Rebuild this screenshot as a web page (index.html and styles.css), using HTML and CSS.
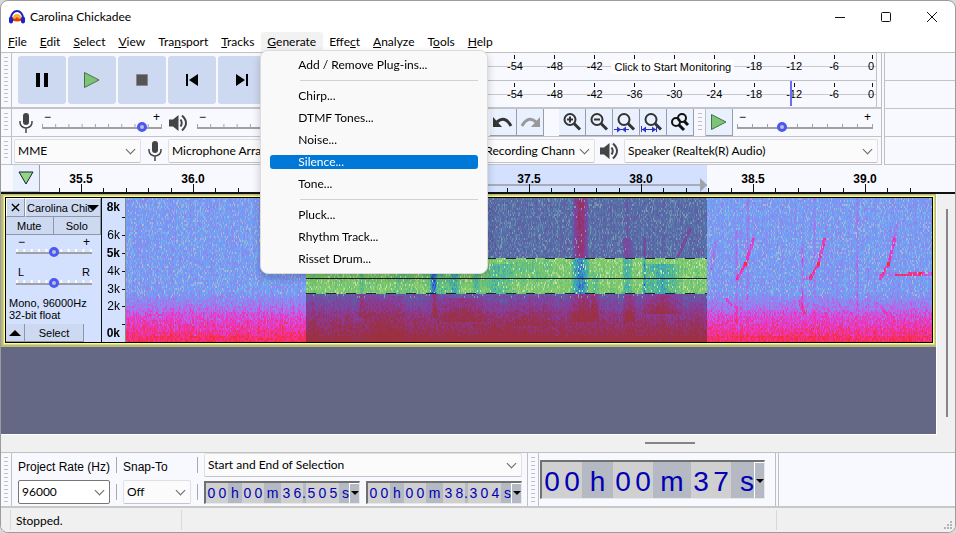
FILE: index.html
```html
<!DOCTYPE html>
<html lang="en">
<head>
<meta charset="utf-8">
<title>Carolina Chickadee</title>
<link rel="stylesheet" href="styles.css">
</head>
<body>
<svg class="defs" aria-hidden="true">
  <symbol id="mic" viewBox="0 0 14 20"><rect x="4" y="0" width="6" height="12" rx="3" fill="#444"/><path d="M1 8v1.500a6 5.500 0 0 0 12 0V8M7 15v5" fill="none" stroke="#444" stroke-width="1.500"/></symbol>
  <symbol id="speaker" viewBox="0 0 19 18"><path d="M0 5.500h4L9.500 1v16L4 12.500H0z" fill="#444"/><path d="M11.500 5.500q2.500 3.500 0 7M13 1.500q8 7.500 0 15" fill="none" stroke="#444" stroke-width="2"/></symbol>
  <symbol id="lens" viewBox="0 0 20 20"><circle cx="8" cy="7.500" r="5.500" fill="none" stroke="#333" stroke-width="2"/><path d="M12 11.500l6 6" stroke="#333" stroke-width="3"/></symbol>
  <symbol id="play" viewBox="0 0 16 16"><path d="M.5.5v15l14.500-7.500z" fill="#7cc576" stroke="#47704a"/></symbol>
</svg>
<div class="window">
  <header class="titlebar">
    <svg class="logo" viewBox="0 0 16 14"><path d="M2 8a6 7 0 0 1 12 0" fill="none" stroke="#1b22c8" stroke-width="2"/><circle cx="8" cy="8" r="4" fill="#f7b02c"/><path d="M4 8l2 1 2-2 2 2 2-1v3H4z" fill="#e8371c"/><rect x="0" y="6.500" width="4" height="7" rx="2" fill="#1b22c8"/><rect x="12" y="6.500" width="4" height="7" rx="2" fill="#1b22c8"/></svg>
    <h1>Carolina Chickadee</h1>
    <button class="sys" aria-label="Minimize"><svg viewBox="0 0 10 10"><path d="M0 5.500h10"/></svg></button>
    <button class="sys" aria-label="Maximize"><svg viewBox="0 0 10 10"><rect x=".5" y=".5" width="9" height="9" rx="1"/></svg></button>
    <button class="sys" aria-label="Close"><svg viewBox="0 0 10 10"><path d="M0 0l10 10M10 0L0 10"/></svg></button>
  </header>

  <nav class="menubar">
    <button><u>F</u>ile</button>
    <button><u>E</u>dit</button>
    <button><u>S</u>elect</button>
    <button><u>V</u>iew</button>
    <button>Tra<u>n</u>sport</button>
    <button><u>T</u>racks</button>
    <div class="open">
      <button><u>G</u>enerate</button>
      <div class="menu">
        <button>Add / Remove Plug-ins...</button>
        <hr>
        <button>Chirp...</button>
        <button>DTMF Tones...</button>
        <button>Noise...</button>
        <button class="active">Silence...</button>
        <button>Tone...</button>
        <hr>
        <button>Pluck...</button>
        <button>Rhythm Track...</button>
        <button>Risset Drum...</button>
      </div>
    </div>
    <button>Effe<u>c</u>t</button>
    <button><u>A</u>nalyze</button>
    <button>T<u>o</u>ols</button>
    <button><u>H</u>elp</button>
  </nav>

  <section class="dock">
    <div class="bars">
      <div class="bar tall">
        <span class="grip"></span>
        <div class="transport">
          <button aria-label="Pause"><svg viewBox="0 0 16 16"><path d="M2 1h4v14H2zM10 1h4v14h-4z"/></svg></button>
          <button aria-label="Play"><svg viewBox="0 0 16 16"><use href="#play"/></svg></button>
          <button aria-label="Stop"><svg viewBox="0 0 16 16"><path d="M2.500 2.500h11v11h-11z" fill="#555" stroke="#888"/></svg></button>
          <button aria-label="Skip to Start"><svg viewBox="0 0 16 16"><path d="M2 2h2v12H2zM14 2v12L5 8z"/></svg></button>
          <button aria-label="Skip to End"><svg viewBox="0 0 16 16"><path d="M12 2h2v12h-2zM2 2v12l9-6z"/></svg></button>
        </div>
        <div class="meters">
          <div class="meter">
            <span>-54</span><span>-48</span><span>-42</span><span>-36</span><span>-30</span><span>-24</span><span>-18</span><span>-12</span><span>-6</span><span>0</span>
            <button class="monitor">Click to Start Monitoring</button>
          </div>
          <div class="meter">
            <span>-54</span><span>-48</span><span>-42</span><span>-36</span><span>-30</span><span>-24</span><span>-18</span><span>-12</span><span>-6</span><span>0</span>
            <i class="peak"></i>
          </div>
        </div>
      </div>

      <div class="bar">
        <span class="grip"></span>
        <div class="mixer">
          <svg class="mic"><use href="#mic"/></svg>
          <label class="slider rec"><span>−</span><span>+</span><input type="range" min="0" max="100" value="86" aria-label="Recording volume"></label>
          <svg class="speaker"><use href="#speaker"/></svg>
          <label class="slider rec"><span>−</span><span>+</span><input type="range" min="0" max="100" value="86" aria-label="Playback volume"></label>
        </div>
        <div class="tools">
          <button aria-label="Undo"><svg viewBox="0 0 20 20"><path d="M4 10q8-7 14 4" fill="none" stroke="#333" stroke-width="3"/><path d="M0 5v10h9z" fill="#333"/></svg></button>
          <button aria-label="Redo"><svg viewBox="0 0 20 20"><path d="M16 10Q8 3 2 14" fill="none" stroke="#999" stroke-width="3"/><path d="M20 5v10h-9z" fill="#999"/></svg></button>
        </div>
        <div class="tools">
          <button aria-label="Zoom In"><svg viewBox="0 0 20 20"><use href="#lens"/><path d="M5 7.500h6M8 4.500v6" stroke="#333" stroke-width="2"/></svg></button>
          <button aria-label="Zoom Out"><svg viewBox="0 0 20 20"><use href="#lens"/><path d="M5 7.500h6" stroke="#333" stroke-width="2"/></svg></button>
          <button aria-label="Fit Selection"><svg viewBox="0 0 20 20"><use href="#lens"/><path d="M-2 17.500h15" stroke="#2b33c8"/><path d="M5 17.500l-4-3v6zM6 17.500l4-3v6z" fill="#2b33c8"/></svg></button>
          <button aria-label="Fit Project"><svg viewBox="0 0 20 20"><use href="#lens"/><path d="M-1.500 14v6M13.500 14v6M-1 17.500h14" stroke="#2b33c8"/><path d="M-1 17.500l4-3v6zM13 17.500l-4-3v6z" fill="#2b33c8"/></svg></button>
          <button aria-label="Zoom Toggle"><svg viewBox="0 0 20 20" fill="none" stroke="#111"><circle cx="6" cy="10" r="4" stroke-width="2"/><circle cx="12" cy="6" r="4" stroke-width="2"/><path d="M9 13l5 5M14 9l4 4" stroke-width="3"/></svg></button>
        </div>
        <span class="grip"></span>
        <div class="tools play"><button aria-label="Play at Speed"><svg viewBox="0 0 16 16"><use href="#play"/></svg></button></div>
        <label class="slider speed"><span>−</span><span>+</span><input type="range" min="0" max="100" value="32" aria-label="Playback speed"></label>
      </div>

      <div class="bar">
        <span class="grip"></span>
        <div class="devices">
          <label class="combo host"><select aria-label="Audio host"><option>MME</option></select></label>
          <svg class="mic"><use href="#mic"/></svg>
          <label class="combo input"><select aria-label="Recording device"><option>Microphone Array (Realtek(R) Audio)</option></select></label>
          <label class="combo channels"><select aria-label="Recording channels"><option>2 (Stereo) Recording Chann</option></select></label>
          <svg class="speaker"><use href="#speaker"/></svg>
          <label class="combo output"><select aria-label="Playback device"><option>Speaker (Realtek(R) Audio)</option></select></label>
        </div>
      </div>
    </div>
    <div class="dock-rest"></div>
  </section>

  <div class="ruler">
    <div class="selected"></div>
    <svg class="ticks"><defs>
      <pattern id="tk" x="80" width="112" height="8" patternUnits="userSpaceOnUse"><path d="M.5 0v8M22.500 4v4M45.500 4v4M67.500 4v4M90.500 4v4" stroke="#111" fill="none"/></pattern>
    </defs><rect width="100%" height="8" fill="url(#tk)"/></svg>
    <div class="times"><span>35.5</span><span>36.0</span><span>36.5</span><span>37.0</span><span>37.5</span><span>38.0</span><span>38.5</span><span>39.0</span></div>
    <button class="pin" aria-label="Pinned play head"><svg viewBox="0 0 16 14"><path d="M1 1h14L8 13z" fill="#8fd58a" stroke="#222"/></svg></button>
  </div>

  <main class="workspace">
    <div class="tracks">
      <article class="track">
        <div class="inner">
          <aside class="panel">
            <div class="row top"><button class="close" aria-label="Close track"><svg viewBox="0 0 10 10"><path d="M1 1l8 8M9 1L1 9" stroke="#000" stroke-width="1.500"/></svg></button><button class="name"><span>Carolina Chic</span><i class="down"></i></button></div>
            <div class="row"><button class="half">Mute</button><button class="half">Solo</button></div>
            <label class="slider gain"><span>−</span><span>+</span><input type="range" value="50" aria-label="Gain"></label>
            <label class="slider gain pan"><span>L</span><span>R</span><input type="range" value="50" aria-label="Pan"></label>
            <p>Mono, 96000Hz<br>32-bit float</p>
            <div class="row foot"><button class="close" aria-label="Collapse"><i class="up"></i></button><button class="select">Select</button></div>
          </aside>
          <div class="scale"><b>8k</b><span class="blank"></span><span>6k</span><b>5k</b><span>4k</span><span>3k</span><span>2k</span><span class="blank"></span><b>0k</b></div>
          <canvas id="spectrogram" width="807" height="144"></canvas>
        </div>
      </article>
    </div>
    <div class="vscroll"><i></i></div>
    <div class="hscroll"><i></i></div>
  </main>

  <section class="selection">
    <span class="grip"></span>
    <div class="settings">
      <label class="cap" for="rate">Project Rate (Hz)</label>
      <i class="rule"></i>
      <label class="cap" for="snap">Snap-To</label>
      <i class="rule"></i>
      <label class="combo mode"><select aria-label="Selection mode"><option>Start and End of Selection</option></select></label>
      <label class="combo rate"><select id="rate"><option>96000</option></select></label>
      <i class="rule"></i>
      <label class="combo snap"><select id="snap"><option>Off</option></select></label>
      <i class="rule"></i>
      <div class="stamps">
        <div class="stamp"><b>0</b><b>0</b><span>h</span><b>0</b><b>0</b><span class="m">m</span><b>3</b><b>6</b><span class="dot">.</span><b>5</b><b>0</b><b>5</b><span class="s">s</span><button aria-label="Start format"><i class="down"></i></button></div>
        <div class="stamp"><b>0</b><b>0</b><span>h</span><b>0</b><b>0</b><span class="m">m</span><b>3</b><b>8</b><span class="dot">.</span><b>3</b><b>0</b><b>4</b><span class="s">s</span><button aria-label="End format"><i class="down"></i></button></div>
      </div>
    </div>
    <span class="grip"></span>
    <div class="position">
      <div class="stamp big"><b>0</b><b>0</b><span>h</span><b>0</b><b>0</b><span class="m">m</span><b>3</b><b>7</b><span class="s">s</span><button aria-label="Position format"><i class="down"></i></button></div>
    </div>
    <div class="dock-rest"></div>
  </section>

  <footer class="status"><span class="lead"></span><span class="state">Stopped.</span><span class="detail"></span><span class="end"><svg viewBox="0 0 9 9"><path d="M6 0h2v2H6zM3 3h2v2H3zM6 3h2v2H6zM0 6h2v2H0zM3 6h2v2H3zM6 6h2v2H6z" fill="#b4b4b4"/></svg></span></footer>
</div>
<script src="spectrogram.js"></script>
</body>
</html>
```
FILE: styles.css
```css
* { box-sizing: border-box; }
body { margin: 0; background: #d8d8d8; font: 12px/16px Lato, "Liberation Sans", sans-serif; color: #000; }
button, select, input { font: inherit; color: inherit; margin: 0; padding: 0; border: 0; background: none; }
svg { display: block; overflow: visible; }
.defs { position: absolute; width: 0; height: 0; }

.window { display: flex; flex-direction: column; min-height: 100vh; border: 1px solid #9c9c9c; border-radius: 8px; overflow: hidden; background: #fff; }

/* title bar */
.titlebar { display: flex; align-items: center; height: 31px; padding-left: 8px; }
.logo { width: 16px; height: 14px; }
.titlebar h1 { flex: 1; margin: 0 0 0 5px; font: inherit; }
.sys { width: 46px; height: 30px; display: grid; place-items: center; }
.sys svg { width: 10px; height: 10px; fill: none; stroke: #111; }

/* menu bar */
.menubar { display: flex; height: 20px; padding-left: 1px; }
.menubar > button, .open > button { padding: 0 7px 0 6px; height: 20px; line-height: 20px; white-space: nowrap; }
.open { position: relative; }
.open > button { background: #f2f2f2; border-radius: 3px 3px 0 0; }
.menu { position: absolute; z-index: 5; left: -1px; top: 18px; width: 228px; padding: 3px 9px; border: 1px solid #dcdcdc; border-radius: 8px; background: #f9f9f9; box-shadow: 0 4px 8px rgba(0, 0, 0, .2); }
.menu button { display: block; width: 100%; height: 14px; margin: 4px 0 8px; padding-left: 28px; line-height: 14px; text-align: left; }
.menu button:last-child { margin-bottom: 4px; }
.menu hr { height: 1px; margin: 0 0 8px 30px; border: 0; background: #d2d2d2; }
.menu .active { border-radius: 3px; background: #0078d7; color: #fff; }

/* tool docks */
.dock { display: flex; border-top: 1px solid #c0c0c0; background: #f8f9ff; }
.bars { flex: 1; min-width: 0; border-right: 1px solid #c0c0c4; }
.dock-rest { flex: 1 1 0; margin-left: 2px; border-left: 1px solid #c0c0c4; background: #f8f9ff; }
.dock .dock-rest { flex: 0 0 71px; background: repeating-linear-gradient(#f8f9ff 0 27px, #c4c4c8 27px 28px); }
.bar { display: flex; height: 28px; border-bottom: 1px solid #c4c4c8; }
.bar.tall { height: 56px; border-bottom-width: 2px; }
.grip { flex: none; width: 11px; padding: 4px 3px; border-right: 1px solid #c0c0c4; background: repeating-linear-gradient(#c0c0c8 0 1px, transparent 1px 4px) content-box; }
.transport { flex: none; display: flex; gap: 2px; width: 475px; padding: 3px 6px; }
.transport button { display: grid; place-items: center; width: 48px; height: 48px; border-radius: 3px; background: #cdd9f1; }
.transport svg { width: 16px; height: 16px; }
.meters { flex: 1; padding-right: 4px; }
.meter { position: relative; display: grid; grid-template-columns: repeat(9, 1fr) 20px; height: 27px; padding: 2px 2px 0 8px; background: linear-gradient(#c8c8cc, #c8c8cc) 0 13px / 100% 1px no-repeat; border-right: 1px solid #c0c0c4; font: 11px/14px "Liberation Sans", sans-serif; text-align: center; }
.meter + .meter { border-top: 1px solid #c0c0c4; }
.meter span::before { content: ""; display: block; width: 1px; height: 4px; margin: 0 auto; background: #111; }
.meter span:nth-child(10) { text-align: right; }
.meter span:nth-child(10)::before { margin-right: 1px; }
.monitor { position: absolute; left: 32%; top: 7px; padding: 0 3px; line-height: 14px; background: #fff; white-space: nowrap; }
.peak { position: absolute; left: 78%; top: 0; width: 2px; height: 25px; background: #6c6cf5; }

.mixer { flex: none; display: flex; align-items: center; width: 478px; padding: 0 7px; }
.mic { flex: none; width: 14px; height: 20px; }
.speaker { flex: none; width: 19px; height: 18px; }
.mixer .rec { flex: none; width: 120px; margin: 0 7px 0 9px; }
.tools { flex: none; display: flex; margin-right: 15px; }
.tools + .grip { margin-left: -14px; }
.tools button { display: grid; place-items: center; width: 27px; height: 27px; border-right: 1px solid #9a9cab; border-bottom: 1px solid #9a9cab; background: #eaf1fe; }
.tools svg { width: 20px; height: 20px; }
.tools.play { margin-right: 4px; }
.tools.play svg { width: 16px; height: 16px; }

/* sliders */
.slider { display: grid; grid-template-columns: 1fr 1fr; align-content: center; font: 12px/9px "Liberation Sans", sans-serif; color: #000; }
.slider span { padding: 0 2px; }
.slider span + span { text-align: right; }
.slider input { grid-column: 1 / 3; appearance: none; width: 100%; height: 10px; background: linear-gradient(#a0a0a0, #a0a0a0) 0 5px / 100% 2px no-repeat, linear-gradient(90deg, #a0a0a0 1px, transparent 1px) 0 2px / calc((100% - 1px) / 9) 4px repeat-x; }
.slider input::-webkit-slider-thumb { appearance: none; width: 10px; height: 10px; border: 3px solid #4c58f0; border-radius: 50%; background: #b8c0d8; }
.speed { flex: 1; margin-right: 8px; }

/* drop-downs */
.devices { flex: 1; display: flex; align-items: center; padding: 0 3px 0 2px; }
.combo { position: relative; display: block; height: 24px; border: 1px solid #e0e0e4; border-bottom-color: #c4c4c8; border-radius: 2px; background: #fbfbfb; }
.combo select { appearance: none; display: block; width: 100%; height: 22px; padding: 0 24px 0 3px; text-overflow: clip; }
.combo::after { content: ""; position: absolute; right: 6px; top: 6px; width: 6px; height: 6px; border: solid #666; border-width: 0 1px 1px 0; transform: rotate(45deg); pointer-events: none; }
.devices .mic { margin: 0 6px 0 7px; }
.devices .speaker { margin: 0 5px; }
.host { width: 127px; }
.input { width: 240px; }
.channels { width: 180px; margin-left: 7px; }
.channels select { text-align: right; padding-right: 19px; }
.output { flex: 1; }

/* timeline */
.ruler { display: grid; grid-template: 27px / 1fr; height: 29px; border-bottom: 2px solid #111; background: #f8f9ff; }
.ruler > * { grid-area: 1 / 1; }
.selected { width: 402px; margin-left: 304px; background: linear-gradient(#a8acb4, #a8acb4) 0 19px / 100% 2px no-repeat #d3e1ff; }
.selected::after { content: ""; display: block; width: 0; margin: 13px 0 0 auto; border: solid transparent; border-width: 7px 0 7px 7px; border-left-color: #a0a4ac; }
.ticks { align-self: end; width: 931px; height: 8px; }
.times { display: flex; padding-left: 24px; overflow: hidden; font: bold 12px/28px "Liberation Sans", sans-serif; }
.times span { flex: none; width: 112px; text-align: center; }
.pin { display: grid; place-items: center; width: 39px; padding-left: 12px; border-right: 1px solid #9a9cab; border-bottom: 1px solid #c4c4c8; background: linear-gradient(#eaf1fe, #eaf1fe) 12px 0 no-repeat #f8f9ff; }
.pin svg { width: 16px; height: 14px; }

/* tracks */
.workspace { flex: 1; display: grid; grid-template-columns: minmax(0, 1fr) 18px; grid-template-rows: 1fr 17px; background: #f0f0f0; }
.tracks { background: #646885; border-right: 1px solid #fff; border-bottom: 1px solid #fff; }
.track { border: solid #b9b97c; border-width: 1px 1px 2px 2px; }
.inner { display: flex; height: 150px; border: 2px solid #ffff82; outline: 1px solid #d6d68a; outline-offset: -1px; background: #000; padding: 1px; }
.vscroll { padding: 15px 0 18px 9px; }
.vscroll i { display: block; width: 2px; height: 100%; background: #858585; }
.hscroll { grid-column: 1 / 3; padding: 7px 0 0 644px; }
.hscroll i { display: block; width: 50px; height: 2px; background: #858585; }
.panel { flex: none; width: 96px; background: #d3e1ff; border-right: 1px solid #111; font: 11px/12px "Liberation Sans", sans-serif; }
.panel p { margin: 9px 3px 3px; }
.row { display: flex; }
.row button { height: 18px; border-right: 1px solid #8e96a8; border-bottom: 1px solid #8e96a8; background: #cdd9f1; }
.row.top button { height: 19px; border-top: 1px solid #fff; border-left: 1px solid #fff; }
.row .close { display: grid; place-items: center; width: 19px; }
.close svg { width: 9px; height: 9px; }
.name { flex: 1; display: flex; align-items: center; padding: 0 1px; }
.name span { flex: 1; width: 0; overflow: hidden; white-space: nowrap; text-align: left; }
.name .down { margin-left: -6px; }
.row .half { flex: 1; }
.row .select { width: 59px; }
.down { border: solid transparent; border-width: 6px 6px 0; border-top-color: #000; }
.up { border: solid transparent; border-width: 0 6px 6px; border-bottom-color: #000; }
.gain { width: 76px; margin: 3px 0 9px 10px; }
.gain.pan { font-size: 11px; line-height: 12px; margin-bottom: 0; }
.gain input { background-image: linear-gradient(#a0a0a0, #a0a0a0), linear-gradient(90deg, #fff 2px, transparent 2px); background-size: 100% 2px, calc((100% - 2px) / 10) 4px; }
.scale { flex: none; display: grid; grid-template-rows: 10px 18px 18px 18px 18px 17px 18px 9px 18px; width: 24px; border-right: 1px solid #888; background: #d3e1ff; font: 12px/18px "Liberation Sans", sans-serif; text-align: right; padding-right: 5px; }
.scale > * { position: relative; }
.scale > *::after { content: ""; position: absolute; right: -5px; top: 9px; width: 3px; height: 1px; background: #111; }
.scale > b:first-child::after, .scale > b:last-child::after { content: none; }
#spectrogram { flex: 1; min-width: 0; height: 144px; image-rendering: pixelated; }

/* selection dock */
.selection { display: flex; height: 56px; border-top: 1px solid #c0c0c4; border-bottom: 2px solid #c8c8c8; background: #f8f9ff; }
.settings { flex: none; display: grid; grid-template-columns: 92px 1px 68px 1px 318px; column-gap: 6px; grid-template-rows: 24px 24px; row-gap: 3px; align-items: center; width: 516px; padding: 0 6px; border-right: 1px solid #c0c0c4; }
.cap { padding-top: 4px; font: 12px/16px "Liberation Sans", sans-serif; white-space: nowrap; }
.rule { height: 16px; background: #a8a8b0; }
.settings .rate { border: 1px solid #777; background: #fff; }
.stamps { display: flex; gap: 6px; }
.stamp { display: flex; width: 156px; height: 23px; border: solid #e8e8e8; border-width: 2px 1px 1px 2px; border-top-color: #707070; border-left-color: #707070; background: #b4b9c3; font: 14px/21px "Liberation Sans", sans-serif; text-align: center; color: #0000b4; }
.stamp b { flex: none; width: 11px; background: #d0d0d0; font-weight: normal; }
.stamp span { flex: none; width: 14px; }
.stamp .m { width: 17px; }
.stamp .dot { width: 3px; text-indent: -1px; }
.stamp .s { flex: 1; text-align: right; }
.stamp button { display: grid; place-items: center; width: 10px; border: solid #fff; border-width: 1px 0 0 1px; }
.stamp .down { border-width: 4px 4px 0; }
.position { flex: none; width: 237px; padding: 7px 1px; border-right: 1px solid #c0c0c4; }
.stamp.big { width: 225px; height: 39px; font-size: 28px; line-height: 40px; }
.big b { width: 20px; }
.big span { width: 31px; }
.big .m { width: 38px; }

/* status bar */
.status { display: flex; height: 24px; padding: 2px 0; background: #f0f0f0; }
.status span { border-right: 1px solid #d8d8d8; line-height: 22px; }
.lead { width: 10px; }
.state { width: 171px; padding-left: 5px; }
.detail { width: 595px; }
.status .end { flex: 1; display: flex; align-items: end; justify-content: end; padding-right: 2px; border: 0; }
.end svg { width: 9px; height: 9px; }
```
FILE: spectrogram.js
```js
(function () {
  const canvas = document.getElementById('spectrogram');
  const ctx = canvas.getContext('2d');
  const W = canvas.width, H = canvas.height;
  const SEL = [180, 582], BAND = [60, 95];

  let seed = 20220117;
  function rnd() {
    seed = (seed * 1664525 + 1013904223) >>> 0;
    return seed / 4294967296;
  }

  // Colour stops run from quiet to loud.
  const NORMAL = [[176, 190, 205], [106, 166, 246], [134, 140, 240], [176, 108, 232], [232, 56, 208], [240, 52, 130], [248, 44, 56]];
  const DARK = [[128, 160, 180], [84, 118, 170], [92, 96, 164], [118, 74, 162], [140, 58, 150], [150, 50, 100], [156, 48, 62]];
  const GREEN = [[200, 232, 176], [136, 204, 104], [112, 194, 116], [72, 182, 160], [60, 160, 184], [54, 112, 204], [40, 60, 214]];

  function colour(stops, v) {
    const t = Math.max(0, Math.min(0.999, v)) * (stops.length - 1);
    const i = Math.floor(t), f = t - i;
    return stops[i].map((c, k) => Math.round(c + (stops[i + 1][k] - c) * f));
  }

  // Vertical bursts: x, half width, top, bottom, strength.
  const bursts = [
    [455, 6, 0, 60, 0.55], [455, 7, 60, 96, 0.5], [458, 12, 96, 124, 0.3],
    [307, 3, 60, 96, 0.5], [329, 4, 50, 96, 0.3], [350, 3, 60, 95, 0.22], [372, 12, 66, 96, 0.2],
    [315, 12, 60, 96, 0.16], [400, 24, 62, 84, 0.1], [275, 10, 62, 96, 0.1],
    [502, 4, 40, 96, 0.28], [504, 5, 96, 124, 0.26], [470, 3, 75, 120, 0.2], [502, 1, 0, 40, 0.2], [519, 1, 40, 95, 0.4],
    [536, 15, 66, 96, 0.32], [536, 16, 96, 116, 0.28], [235, 2, 60, 110, 0.16], [240, 8, 96, 120, 0.12],
    [262, 14, 98, 144, 0.14], [308, 3, 96, 120, 0.28], [335, 20, 100, 124, 0.22], [376, 14, 104, 140, 0.06], [410, 20, 98, 128, 0.12],
    [611, 1, 30, 125, 0.22], [622, 1, 0, 105, 0.16], [619, 1, 40, 80, 0.12], [677, 1, 45, 110, 0.26],
    [689, 1, 0, 95, 0.12], [732, 1, 0, 110, 0.15], [743, 1, 70, 110, 0.18], [764, 1, 30, 80, 0.1], [708, 1, 70, 110, 0.08]
  ];
  // Rising calls and held notes: x0, y0, x1, y1, strength.
  const calls = [
    [612, 79, 620, 65, 0.42], [620, 65, 628, 40, 0.38], [628, 40, 631, 25, 0.12],
    [685, 79, 693, 65, 0.48], [693, 65, 699, 40, 0.44], [755, 79, 763, 65, 0.44], [763, 65, 769, 40, 0.38], [769, 40, 771, 25, 0.16],
    [601, 100, 606, 106, 0.25], [673, 100, 679, 114, 0.22], [752, 104, 762, 116, 0.14],
    [551, 60, 565, 30, 0.3], [680, 79, 684, 78, 0.2],
    [771, 76, 795, 75, 0.6], [795, 75, 806, 75, 0.36], [750, 75, 770, 75, 0.12],
    [586, 70, 590, 45, 0.2], [262, 60, 269, 45, 0.2]
  ];

  function distance(x, y, c) {
    const dx = c[2] - c[0], dy = c[3] - c[1];
    const t = Math.max(0, Math.min(1, ((x - c[0]) * dx + (y - c[1]) * dy) / (dx * dx + dy * dy)));
    return Math.hypot(x - c[0] - t * dx, y - c[1] - t * dy);
  }

  function level(x, y) {
    let v = 0.23;
    if (x >= SEL[0] && x < SEL[1] && y >= BAND[1]) v += 0.12;
    if (y > 92) v += Math.min(0.3, (y - 92) / 75);
    if (y > 110) v += Math.min(0.28, (y - 110) / 90);
    if (y > 136) v += 0.08;
    for (const b of bursts) {
      if (y >= b[2] && y < b[3]) {
        const d = Math.abs(x - b[0]) / b[1];
        if (d < 1.4) v += b[4] * Math.max(0, 1 - d * d * 0.5);
      }
    }
    for (const c of calls) if (distance(x, y, c) < 1.5) v += c[4];
    return v;
  }

  for (let x = 0; x < W; x++) {
    const streak = (rnd() - 0.5) * 0.1;
    for (let y = 0; y < H; y += 2) {
      const inside = x >= SEL[0] && x < SEL[1];
      const banded = inside && y >= BAND[0] && y < BAND[1];
      let v = level(x, y) + streak + (rnd() + rnd() - 1) * 0.22;
      if (rnd() < 0.05 && y < 100) v = 0.02;
      else if (y < 110) v = Math.max(v, 0.08);
      const c = colour(banded ? GREEN : inside ? DARK : NORMAL, v);
      ctx.fillStyle = 'rgb(' + c.join(',') + ')';
      ctx.fillRect(x, y, 1, 2);
    }
  }

  ctx.fillStyle = '#20242c';
  ctx.fillRect(SEL[0], 80, SEL[1] - SEL[0], 1);
  for (const y of BAND) {
    for (let x = SEL[0]; x < SEL[1]; x += 20) ctx.fillRect(x, y, Math.min(10, SEL[1] - x), 1);
  }
})();
```
